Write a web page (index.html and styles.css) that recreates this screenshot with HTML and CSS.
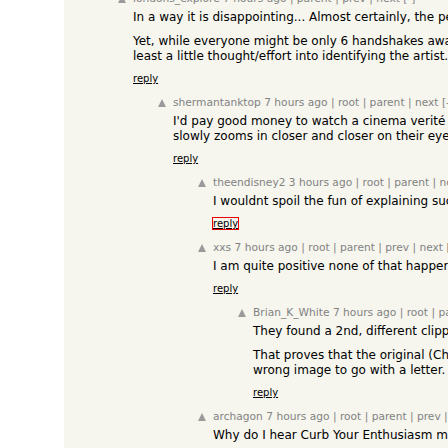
FILE: index.html
```html
<!DOCTYPE html>
<html lang="en">
<head>
<meta charset="utf-8">
<title>Comments</title>
<link rel="stylesheet" href="styles.css">
</head>
<body>
<div class="page">
  <div class="thread">

    <div class="comment lvl0">
      <div class="vote"><span class="arrow"></span></div>
      <div class="body">
        <div class="meta">londons_explore 7 hours ago | parent | prev | next [-]</div>
        <div class="text">
          <p>In a way it is disappointing... Almost certainly, the person who took the photo is still alive.</p>
          <p>Yet, while everyone might be only 6 handshakes away from them, nobody has put at<br>least a little thought/effort into identifying the artist.</p>
        </div>
        <div class="reply"><a href="#">reply</a></div>
      </div>
    </div>

    <div class="comment lvl1">
      <div class="vote"><span class="arrow"></span></div>
      <div class="body">
        <div class="meta">shermantanktop 7 hours ago | root | parent | next [-]</div>
        <div class="text">
          <p>I'd pay good money to watch a cinema verité documentary where somebody<br>slowly zooms in closer and closer on their eyes in the photo.</p>
        </div>
        <div class="reply"><a href="#">reply</a></div>
      </div>
    </div>

    <div class="comment lvl2">
      <div class="vote"><span class="arrow"></span></div>
      <div class="body">
        <div class="meta">theendisney2 3 hours ago | root | parent | next [-]</div>
        <div class="text">
          <p>I wouldnt spoil the fun of explaining such a thing.</p>
        </div>
        <div class="reply"><a href="#" class="focused">reply</a></div>
      </div>
    </div>

    <div class="comment lvl2">
      <div class="vote"><span class="arrow"></span></div>
      <div class="body">
        <div class="meta">xxs 7 hours ago | root | parent | prev | next [-]</div>
        <div class="text">
          <p>I am quite positive none of that happened.</p>
        </div>
        <div class="reply"><a href="#">reply</a></div>
      </div>
    </div>

    <div class="comment lvl3">
      <div class="vote"><span class="arrow"></span></div>
      <div class="body">
        <div class="meta">Brian_K_White 7 hours ago | root | parent | next [-]</div>
        <div class="text">
          <p>They found a 2nd, different clipping of the same letter.</p>
          <p>That proves that the original (Chicago Tribune) simply used the<br>wrong image to go with a letter.</p>
        </div>
        <div class="reply"><a href="#">reply</a></div>
      </div>
    </div>

    <div class="comment lvl2">
      <div class="vote"><span class="arrow"></span></div>
      <div class="body">
        <div class="meta">archagon 7 hours ago | root | parent | prev | next [-]</div>
        <div class="text">
          <p>Why do I hear Curb Your Enthusiasm music playing in my head?</p>
        </div>
        <div class="reply"><a href="#">reply</a></div>
      </div>
    </div>

  </div>
</div>
</body>
</html>
```
FILE: styles.css
```css
html, body {
  margin: 0;
  padding: 0;
  background: #ffffff;
  overflow: hidden;
  height: 100%;
}

body {
  font-family: "DejaVu Sans", Verdana, sans-serif;
  color: #000000;
}

.page {
  margin-left: 64px;
  min-height: 100%;
  background: #f6f6ef;
}

.thread {
  display: flex;
  flex-direction: column;
  gap: 11px;
  margin-top: -8px;
  padding-left: 54px;
}

.comment {
  display: grid;
  grid-template-columns: 15px auto;
  white-space: nowrap;
}

.lvl1 { margin-left: 40px; }
.lvl2 { margin-left: 80px; }
.lvl3 { margin-left: 120px; }

.vote {
  padding-top: 3px;
}

.arrow {
  display: block;
  width: 0;
  height: 0;
  border-left: 4.5px solid transparent;
  border-right: 4.5px solid transparent;
  border-bottom: 8px solid #9a9a9a;
}

.meta {
  font-size: 10.67px;
  line-height: 13px;
  color: #828282;
}

.text {
  margin-top: 5px;
  font-size: 12px;
  line-height: 15px;
  display: flex;
  flex-direction: column;
  gap: 9px;
}

.text p {
  margin: 0;
}

.reply {
  margin-top: 8px;
  font-size: 10px;
  line-height: 13px;
}

.reply a {
  color: #000000;
  text-decoration: underline;
}

.reply a.focused {
  outline: 1px solid #ee0000;
  outline-offset: 0;
}
```
